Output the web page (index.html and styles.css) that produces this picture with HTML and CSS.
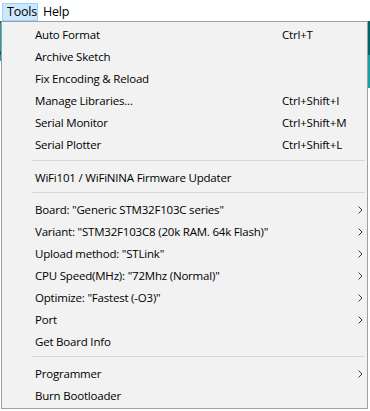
FILE: index.html
```html
<!DOCTYPE html>
<html>
<head>
<meta charset="utf-8">
<link rel="stylesheet" href="styles.css">
</head>
<body>
<div class="menubar">
  <div class="mb-item active">Tools</div>
  <div class="mb-item">Help</div>
</div>
<div class="stage">
  <div class="edge-left"></div>
  <div class="menu">
    <div class="row"><span class="label">Auto Format</span><span class="key">Ctrl+T</span><span></span></div>
    <div class="row"><span class="label">Archive Sketch</span><span class="key"></span><span></span></div>
    <div class="row"><span class="label">Fix Encoding &amp; Reload</span><span class="key"></span><span></span></div>
    <div class="row"><span class="label">Manage Libraries...</span><span class="key">Ctrl+Shift+I</span><span></span></div>
    <div class="row"><span class="label">Serial Monitor</span><span class="key">Ctrl+Shift+M</span><span></span></div>
    <div class="row"><span class="label">Serial Plotter</span><span class="key">Ctrl+Shift+L</span><span></span></div>
    <div class="sep first"></div>
    <div class="row"><span class="label">WiFi101 / WiFiNINA Firmware Updater</span><span class="key"></span><span></span></div>
    <div class="sep"></div>
    <div class="row"><span class="label">Board: "Generic STM32F103C series"</span><span class="key"></span><span class="arrow"><svg width="5" height="8" viewBox="0 0 5 8"><polyline points="0.5,0.5 4,4 0.5,7.5" fill="none" stroke="#3c3c3c" stroke-width="1"/></svg></span></div>
    <div class="row"><span class="label">Variant: "STM32F103C8 (20k RAM. 64k Flash)"</span><span class="key"></span><span class="arrow"><svg width="5" height="8" viewBox="0 0 5 8"><polyline points="0.5,0.5 4,4 0.5,7.5" fill="none" stroke="#3c3c3c" stroke-width="1"/></svg></span></div>
    <div class="row"><span class="label">Upload method: "STLink"</span><span class="key"></span><span class="arrow"><svg width="5" height="8" viewBox="0 0 5 8"><polyline points="0.5,0.5 4,4 0.5,7.5" fill="none" stroke="#3c3c3c" stroke-width="1"/></svg></span></div>
    <div class="row"><span class="label">CPU Speed(MHz): "72Mhz (Normal)"</span><span class="key"></span><span class="arrow"><svg width="5" height="8" viewBox="0 0 5 8"><polyline points="0.5,0.5 4,4 0.5,7.5" fill="none" stroke="#3c3c3c" stroke-width="1"/></svg></span></div>
    <div class="row"><span class="label">Optimize: "Fastest (-O3)"</span><span class="key"></span><span class="arrow"><svg width="5" height="8" viewBox="0 0 5 8"><polyline points="0.5,0.5 4,4 0.5,7.5" fill="none" stroke="#3c3c3c" stroke-width="1"/></svg></span></div>
    <div class="row"><span class="label">Port</span><span class="key"></span><span class="arrow"><svg width="5" height="8" viewBox="0 0 5 8"><polyline points="0.5,0.5 4,4 0.5,7.5" fill="none" stroke="#3c3c3c" stroke-width="1"/></svg></span></div>
    <div class="row"><span class="label">Get Board Info</span><span class="key"></span><span></span></div>
    <div class="sep"></div>
    <div class="row"><span class="label">Programmer</span><span class="key"></span><span class="arrow"><svg width="5" height="8" viewBox="0 0 5 8"><polyline points="0.5,0.5 4,4 0.5,7.5" fill="none" stroke="#3c3c3c" stroke-width="1"/></svg></span></div>
    <div class="row"><span class="label">Burn Bootloader</span><span class="key"></span><span></span></div>
  </div>
  <div class="edge-right"></div>
</div>
</body>
</html>
```

FILE: styles.css
```css
html, body {
  margin: 0;
  padding: 0;
  background: #ffffff;
  width: 370px;
  height: 411px;
  overflow: hidden;
}
body {
  font-family: "Open Sans", "Noto Sans", sans-serif;
  font-size: 11.5px;
  letter-spacing: -0.2px;
  color: #000000;
}
.menubar {
  height: 21px;
  box-sizing: border-box;
  padding: 3px 0 0 2px;
  display: flex;
  align-items: flex-start;
}
.mb-item {
  height: 18px;
  box-sizing: border-box;
  line-height: 16px;
  padding: 0 6px 0 4px;
  border: 1px solid transparent;
  font-size: 12.5px;
}
.mb-item.active {
  background: #cce8ff;
  border-color: #99d1ff;
  width: 36px;
}
.stage {
  display: flex;
  align-items: flex-start;
}
.edge-left {
  width: 1px;
  height: 390px;
  background: linear-gradient(#006468 0, #006468 2px, #17a1a5 2px, #17a1a5 30px, #006468 30px, #006468 34px, #17a1a5 34px, #17a1a5 40px, #ffffff 40px);
}
.edge-right {
  width: 2px;
  height: 390px;
  background: linear-gradient(#006468 0, #006468 34px, #17a1a5 34px, #17a1a5 67px, #ffffff 67px);
}
.menu {
  width: 367px;
  height: 388px;
  box-sizing: border-box;
  border: 1px solid #a0a0a0;
  background: #f2f2f2;
  padding: 2px 0 1px 0;
}
.row {
  height: 22px;
  line-height: 22px;
  display: grid;
  grid-template-columns: 247px 1fr 20px;
  padding-left: 33px;
  white-space: nowrap;
}
.label {
  overflow: visible;
}
.arrow {
  display: flex;
  align-items: center;
  padding-left: 11px;
}
.arrow svg {
  display: block;
}
.sep {
  height: 10px;
  display: flex;
  align-items: flex-start;
  padding: 3px 2px 0 30px;
  box-sizing: border-box;
}
.sep.first {
  height: 11px;
  padding-top: 4px;
}
.sep::before {
  content: "";
  display: block;
  flex: 1;
  height: 1px;
  background: #d7d7d7;
}
```
